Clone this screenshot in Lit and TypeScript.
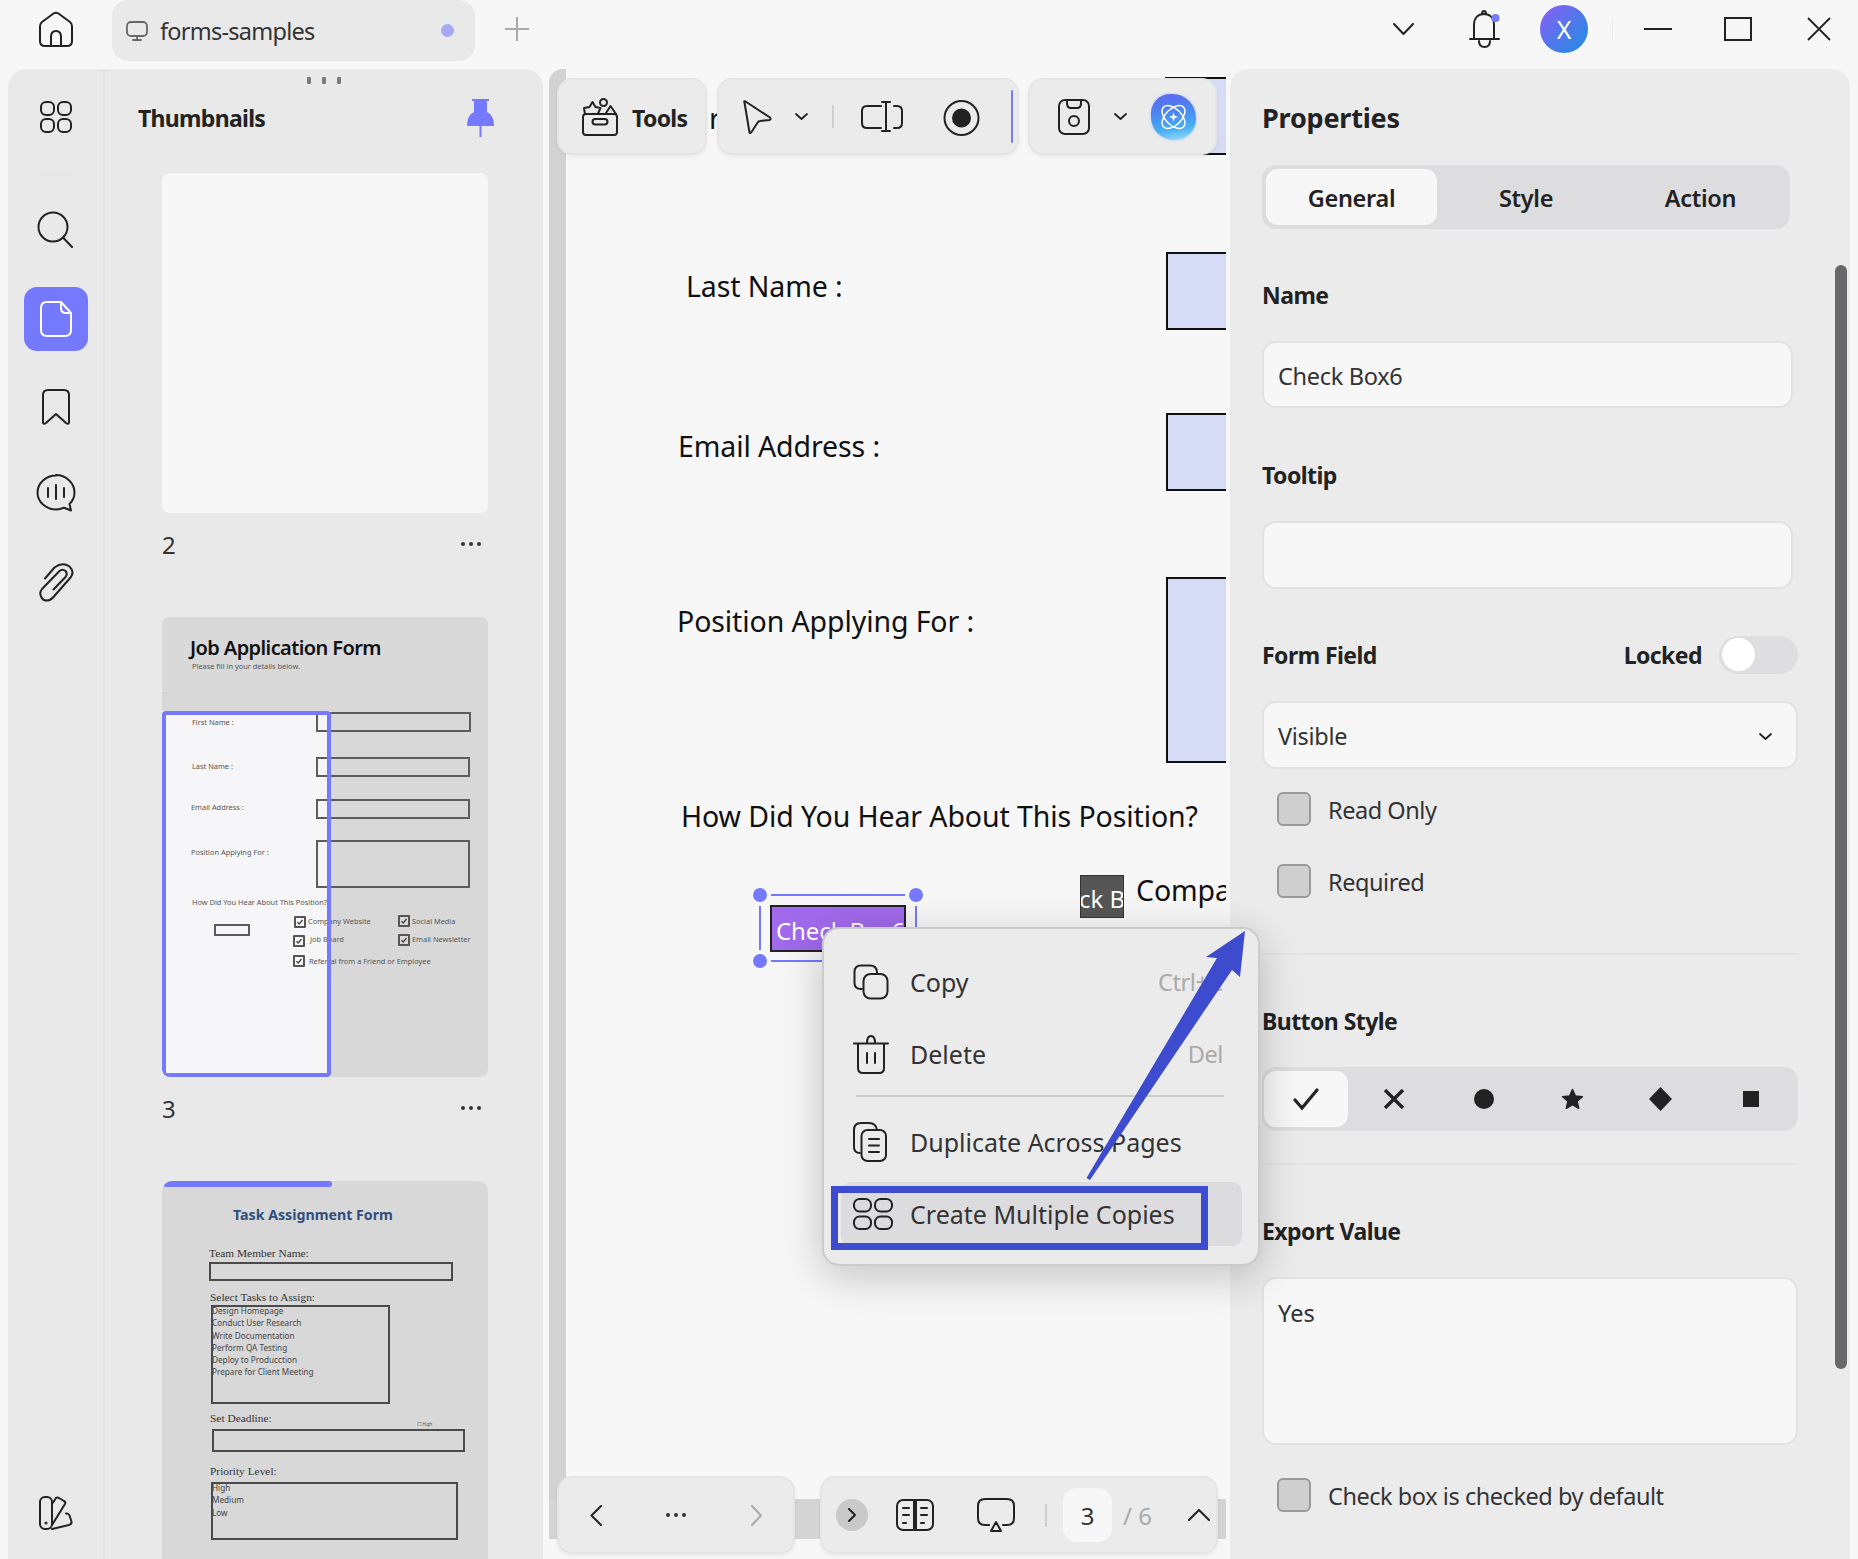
import { LitElement, html, css, svg } from "lit";
import { customElement } from "lit/decorators.js";

const ink = "#222";

const thumb2Boxes = [
  [154, 95, 155, 20],
  [154, 140, 154, 20],
  [154, 182, 154, 20],
  [154, 223, 154, 48],
  [52, 307, 36, 12],
];
const thumb2Labels: [string, number, number][] = [
  ["First Name :", 30, 105],
  ["Last Name :", 30, 149],
  ["Email Address :", 29, 190],
  ["Position Applying For :", 29, 235],
  ["How Did You Hear About This Position?", 30, 285],
  ["Company Website", 146, 304],
  ["Social Media", 250, 304],
  ["Job Board", 148, 322],
  ["Email Newsletter", 250, 322],
  ["Referral from a Friend or Employee", 147, 344],
];
const thumb2Checks = [
  [132, 299],
  [236, 298],
  [131, 318],
  [236, 317],
  [131, 338],
];
const thumb3Boxes = [
  [47, 81, 244, 19],
  [49, 124, 179, 99],
  [50, 248, 253, 23],
  [49, 301, 247, 58],
];
const thumb3Heads: [string, number, number][] = [
  ["Team Member Name:", 47, 72],
  ["Select Tasks to Assign:", 48, 116],
  ["Set Deadline:", 48, 237],
  ["Priority Level:", 48, 290],
];
const thumb3Lines: [string, number, number][] = [
  ["Design Homepage", 50, 129],
  ["Conduct User Research", 50, 141],
  ["Write Documentation", 50, 154],
  ["Perform QA Testing", 50, 166],
  ["Deploy to Producction", 50, 178],
  ["Prepare for Client Meeting", 50, 190],
  ["High", 50, 306],
  ["Medium", 50, 318],
  ["Low", 50, 331],
];

const pageLabels: [string, number, number][] = [
  ["Last Name :", 120, 217],
  ["Email Address :", 112, 377],
  ["Position Applying For :", 111, 552],
  ["How Did You Hear About This Position?", 115, 747],
];
const pageFields = [
  [599, 8, 200, 78],
  [600, 183, 200, 78],
  [600, 344, 200, 78],
  [600, 508, 200, 186],
];

const icon = (w: number, h: number, body: unknown, cls = "") =>
  html`<svg class="ic ${cls}" width=${w} height=${h} viewBox="0 0 ${w} ${h}" fill="none" stroke=${ink} stroke-width="2" stroke-linecap="round" stroke-linejoin="round">${body}</svg>`;

const chevronDown = (w = 13, h = 7) =>
  html`<svg class="ic" width=${w} height=${h} viewBox="0 0 13 7" fill="none" stroke=${ink} stroke-width="1.8" stroke-linecap="round" stroke-linejoin="round"><path d="M1 1l5.5 5L12 1" /></svg>`;

@customElement("app-root")
export class AppRoot extends LitElement {
  static styles = css`
    :host {
      display: block;
      width: 1858px;
      height: 1559px;
      overflow: hidden;
      background: #f7f7f8;
      color: #222;
      font-family: "Noto Sans", "Liberation Sans", sans-serif;
      font-size: 24px;
    }
    * {
      box-sizing: border-box;
    }
    .ic {
      display: block;
      flex: none;
    }

    /* title bar */
    .topbar {
      height: 69px;
      display: flex;
      align-items: center;
      padding: 0 27px 11px 38px;
    }
    .tab {
      align-self: flex-start;
      width: 363px;
      height: 61px;
      margin-left: 38px;
      padding: 0 21px 0 14px;
      display: flex;
      align-items: center;
      background: #e9e9ea;
      border-radius: 16px;
    }
    .tab-name {
      margin-left: 12px;
      flex: 1;
      font-size: 23.5px;
      letter-spacing: -0.75px;
      color: #333;
    }
    .tab-dot {
      width: 13px;
      height: 13px;
      border-radius: 50%;
      background: #a5a9f6;
    }
    .plus {
      margin-left: 30px;
    }
    .t-chev {
      margin-left: auto;
    }
    .bell {
      margin-left: 55px;
    }
    .avatar {
      margin-left: 40px;
      width: 48px;
      height: 48px;
      border-radius: 50%;
      display: flex;
      align-items: center;
      justify-content: center;
      color: #fff;
      font-size: 25px;
      background: linear-gradient(135deg, #8b5ef6, #1b8fe0);
    }
    .t-sep {
      margin-left: 24px;
      width: 1px;
      height: 20px;
      background: #ececed;
    }
    .t-min {
      margin-left: 31px;
    }
    .t-max {
      margin-left: 52px;
    }
    .t-close {
      margin-left: 55px;
    }

    .body {
      height: 1490px;
      display: flex;
      align-items: flex-start;
    }

    /* left panel */
    .left {
      width: 535px;
      height: 1490px;
      margin-left: 8px;
      display: flex;
      background: #e9e9ea;
      border-radius: 18px 18px 0 0;
      overflow: hidden;
    }
    .rail {
      width: 97px;
      height: 100%;
      flex: none;
      display: flex;
      flex-direction: column;
      align-items: center;
      padding-top: 32px;
      border-right: 2px solid #e4e4e5;
    }
    .rail-sep {
      width: 34px;
      height: 1px;
      margin: 41px 0 12px;
      background: #e2e2e3;
    }
    .rail-item {
      width: 64px;
      height: 88px;
      display: flex;
      align-items: center;
      justify-content: center;
    }
    .rail-item.up {
      padding-bottom: 4px;
    }
    .rail-item.on .pill {
      width: 64px;
      height: 64px;
      display: flex;
      align-items: center;
      justify-content: center;
      border-radius: 13px;
      background: #7579ff;
    }
    .rail-foot {
      margin-top: auto;
      margin-bottom: 29px;
    }
    .thumbs {
      flex: 1;
      min-width: 0;
    }
    .drag {
      display: flex;
      justify-content: center;
      gap: 11px;
      padding-top: 8px;
    }
    .drag i {
      width: 4px;
      height: 7px;
      border-radius: 1px;
      background: #7d7d7e;
    }
    .thumb-head {
      height: 68px;
      padding: 0 49px 0 33px;
      margin-bottom: 21px;
      display: flex;
      align-items: center;
      justify-content: space-between;
      font-weight: 700;
      font-size: 23px;
      letter-spacing: -0.7px;
    }
    .thumb-list {
      padding-left: 57px;
      width: 383px;
    }
    .thumb {
      position: relative;
      overflow: hidden;
      background: #d8d8d9;
      border-radius: 8px;
    }
    .thumb.blank {
      height: 340px;
      background: #f7f7f8;
    }
    .thumb.job {
      height: 460px;
    }
    .thumb.task {
      height: 400px;
      border-radius: 10px 10px 0 0;
    }
    .thumb-band {
      position: absolute;
      left: 0;
      top: 0;
      width: 100%;
      height: 76px;
      background: #d9d9da;
      border-bottom: 1px solid #d3d3d4;
    }
    .thumb-light {
      position: absolute;
      left: 0;
      top: 94px;
      width: 169px;
      height: 366px;
      background: #f6f6f8;
    }
    .thumb-sel {
      position: absolute;
      left: 0;
      top: 94px;
      width: 169px;
      height: 366px;
      border: 4px solid #7579ff;
      border-radius: 4px;
    }
    .thumb-bar {
      position: absolute;
      left: 1px;
      top: 0;
      width: 169px;
      height: 6px;
      border-radius: 3px;
      background: #7579ff;
    }
    .tb {
      position: absolute;
      border: 2px solid #5c5c5c;
    }
    .tb.dark {
      border-color: #4a4a4a;
    }
    .tc {
      position: absolute;
      width: 12px;
      height: 12px;
      border: 2px solid #555;
      border-radius: 1px;
    }
    .tt {
      position: absolute;
      white-space: nowrap;
      transform: translateY(-50%);
      font-size: 7.4px;
      color: #555;
    }
    .tt.job-title {
      font-size: 20px;
      font-weight: 600;
      letter-spacing: -0.6px;
      color: #111;
    }
    .tt.task-title {
      font-size: 14.2px;
      font-weight: 700;
      color: #2f4f7f;
    }
    .tt.serif {
      font-family: "Liberation Serif", serif;
      font-size: 11.4px;
      color: #333;
    }
    .tt.list {
      font-size: 8.2px;
      color: #444;
    }
    .tt.tiny {
      font-size: 4.6px;
    }
    .thumb-row {
      height: 40px;
      margin: 11px 0 53px;
      padding-right: 7px;
      display: flex;
      align-items: center;
      justify-content: space-between;
      color: #333;
    }
    .more {
      display: flex;
      gap: 4px;
    }
    .more i {
      width: 4px;
      height: 4px;
      border-radius: 50%;
      background: #333;
    }

    /* document area */
    .main {
      position: relative;
      width: 677px;
      height: 1470px;
      margin-left: 6px;
      display: flex;
      flex-direction: column;
    }
    .page-row {
      flex: 1;
      min-height: 0;
      display: flex;
    }
    .gutter {
      width: 17px;
      background: #d2d2d3;
      border-radius: 14px 0 0 0;
    }
    .page {
      position: relative;
      flex: 1;
      overflow: hidden;
      background: #f7f7f8;
      font-size: 28.5px;
      letter-spacing: -0.1px;
      color: #111;
    }
    .hscroll {
      height: 40px;
      background: #d4d4d5;
    }
    .pl {
      position: absolute;
      white-space: nowrap;
      transform: translateY(-50%);
    }
    .pf {
      position: absolute;
      background: #d6dbf6;
      border: 2px solid #111;
    }
    .sel-box {
      position: absolute;
      left: 193px;
      top: 825px;
      width: 158px;
      height: 68px;
      border: 2px solid #7579ff;
    }
    .handle {
      position: absolute;
      width: 14px;
      height: 14px;
      border-radius: 50%;
      background: #7579ff;
      box-shadow: 0 0 0 4px #f7f7f8;
    }
    .h-tl {
      left: -8px;
      top: -8px;
    }
    .h-tr {
      right: -8px;
      top: -8px;
    }
    .h-bl {
      left: -8px;
      bottom: -8px;
    }
    .cb-purple {
      position: absolute;
      left: 204px;
      top: 836px;
      width: 136px;
      height: 47px;
      padding: 4px 0 0 4px;
      display: flex;
      align-items: center;
      white-space: nowrap;
      overflow: hidden;
      background: #a169ec;
      border: 2px solid #222;
      color: #fff;
      font-size: 24px;
    }
    .cb-dark {
      position: absolute;
      left: 514px;
      top: 806px;
      width: 44px;
      height: 43px;
      padding-top: 4px;
      display: flex;
      align-items: center;
      justify-content: center;
      overflow: hidden;
      white-space: nowrap;
      background: #555;
      border: 1px solid #333;
      color: #fff;
      font-size: 24px;
    }

    /* floating toolbars */
    .bar {
      position: absolute;
      display: flex;
      align-items: center;
      height: 77px;
      background: #ebebec;
      border: 2px solid #e5e5e6;
      border-radius: 15px;
      box-shadow: 0 2px 4px rgba(0, 0, 0, 0.06);
    }
    .bar.tools {
      left: 8px;
      top: 9px;
      width: 150px;
      padding-left: 23px;
    }
    .bar.select {
      left: 168px;
      top: 9px;
      width: 302px;
      padding-left: 23px;
    }
    .bar.save {
      left: 479px;
      top: 9px;
      width: 189px;
      padding-left: 28px;
    }
    .bar.pager {
      left: 8px;
      top: 1407px;
      width: 238px;
      height: 78px;
      padding-left: 31px;
    }
    .bar.view {
      left: 271px;
      top: 1407px;
      width: 398px;
      height: 78px;
      padding-left: 14px;
    }
    .tools-label {
      margin-left: 14px;
      padding-top: 2px;
      font-weight: 700;
      font-size: 23px;
      letter-spacing: -0.7px;
    }
    .m23 {
      margin-left: 23px;
    }
    .m24 {
      margin-left: 24px;
    }
    .m27 {
      margin-left: 27px;
    }
    .m28 {
      margin-left: 28px;
    }
    .m30 {
      margin-left: 30px;
    }
    .m31 {
      margin-left: 31px;
    }
    .m36 {
      margin-left: 36px;
    }
    .m40 {
      margin-left: 40px;
    }
    .m43 {
      margin-left: 43px;
    }
    .m64 {
      margin-left: 64px;
    }
    .m65 {
      margin-left: 65px;
    }
    .vsep {
      width: 2px;
      height: 23px;
      background: #cfcfd0;
    }
    .blue-line {
      width: 2px;
      height: 53px;
      background: #7579ff;
      border-radius: 1px;
    }
    .ai {
      position: relative;
      width: 45px;
      height: 46px;
      border-radius: 42% 52% 46% 50%;
      background: linear-gradient(170deg, #5e65ee 0%, #4c86f2 40%, #45aef4 72%, #a8e2f8 100%);
      box-shadow: 0 0 3px rgba(90, 150, 240, 0.45);
    }
    .ai svg {
      position: absolute;
      left: 4px;
      top: 4px;
    }
    .round-btn {
      width: 32px;
      height: 32px;
      margin-left: 0;
      display: flex;
      align-items: center;
      justify-content: center;
      border-radius: 50%;
      background: #c9c9ca;
    }
    .pg-input {
      width: 49px;
      height: 54px;
      margin-left: 16px;
      display: flex;
      align-items: center;
      justify-content: center;
      background: #f7f7f8;
      border-radius: 14px;
      color: #333;
    }
    .pg-total {
      margin-left: 11px;
      color: #aaa;
    }

    /* context menu */
    .menu {
      position: absolute;
      z-index: 5;
      left: 273px;
      top: 858px;
      width: 438px;
      height: 339px;
      padding: 17px 16px 0 17px;
      background: #ebebec;
      border: 2px solid #cbcbcc;
      border-radius: 17px;
      box-shadow: 0 10px 44px rgba(0, 0, 0, 0.22);
      font-size: 25px;
      color: #333;
    }
    .mi {
      height: 72px;
      padding: 0 19px 0 12px;
      display: flex;
      align-items: center;
    }
    .mi .ic {
      margin-right: 20px;
    }
    .mi span {
      white-space: nowrap;
    }
    .mi-cell {
      width: 57px;
      flex: none;
    }
    .mi kbd {
      margin-left: auto;
      font: inherit;
      font-size: 23.5px;
      letter-spacing: -0.4px;
      color: #aaa;
    }
    .mi-sep {
      height: 2px;
      margin: 5px 18px 9px 15px;
      background: #cdcdce;
    }
    .mi.hover {
      height: 64px;
      margin-top: 4px;
      background: #dcdcde;
      border-radius: 10px;
    }
    .mark {
      position: absolute;
      left: 7px;
      top: 257px;
      width: 377px;
      height: 64px;
      border: 7px solid #3d4bcf;
    }
    .arrow {
      position: absolute;
      z-index: 6;
      left: 531px;
      top: 856px;
    }

    /* properties */
    .right {
      position: relative;
      width: 620px;
      height: 1490px;
      margin-left: 4px;
      padding: 29px 52px 0 32px;
      background: #ebebec;
      border-radius: 18px 18px 0 0;
      overflow: hidden;
    }
    .title {
      height: 40px;
      line-height: 40px;
      font-size: 27px;
      font-weight: 700;
      letter-spacing: -0.2px;
    }
    .seg {
      display: grid;
      background: #dddddf;
      border-radius: 14px;
    }
    .tabs {
      width: 528px;
      height: 64px;
      margin-top: 27px;
      padding: 4px;
      grid-template-columns: 171px 178px 1fr;
      font-size: 23.5px;
      font-weight: 600;
      letter-spacing: -0.3px;
    }
    .tabs > div {
      padding-top: 2px;
    }
    .seg > div {
      display: flex;
      align-items: center;
      justify-content: center;
    }
    .seg .on {
      background: #f7f7f8;
      border-radius: 12px;
    }
    .label {
      height: 32px;
      line-height: 32px;
      font-size: 23px;
      font-weight: 700;
      letter-spacing: -0.55px;
    }
    .field {
      display: flex;
      align-items: center;
      justify-content: space-between;
      padding: 2px 24px 0 14px;
      background: #f7f7f8;
      border: 2px solid #e2e2e3;
      border-radius: 14px;
      font-size: 23.5px;
      letter-spacing: -0.3px;
      color: #333;
    }
    .short {
      width: 531px;
    }
    .row {
      height: 38px;
      display: flex;
      align-items: center;
    }
    .toggle {
      position: relative;
      width: 79px;
      height: 38px;
      margin-left: 17px;
      background: #dedee0;
      border-radius: 19px;
    }
    .toggle i {
      position: absolute;
      left: 3px;
      top: 2px;
      width: 33px;
      height: 33px;
      border-radius: 50%;
      background: #fff;
    }
    .check {
      height: 34px;
      padding-left: 15px;
      display: flex;
      align-items: center;
      gap: 17px;
      font-size: 23.5px;
      letter-spacing: -0.45px;
      color: #333;
    }
    .check span {
      padding-top: 2px;
    }
    .check i {
      width: 34px;
      height: 34px;
      background: #cfcfd0;
      border: 2px solid #9a9a9b;
      border-radius: 6px;
    }
    .div {
      height: 2px;
      background: #e4e4e6;
    }
    .styles {
      height: 64px;
      margin-top: 30px;
      padding: 4px 0 4px 2px;
      grid-template-columns: 84px 92px 88px 88px 88px 1fr;
    }
    .area {
      height: 168px;
      margin-top: 30px;
      padding: 18px 14px;
      background: #f7f7f8;
      border: 2px solid #e2e2e3;
      border-radius: 14px;
      font-size: 23.5px;
      color: #333;
    }
    .scroll {
      position: absolute;
      right: 3px;
      top: 196px;
      width: 12px;
      height: 1104px;
      border-radius: 6px;
      background: #68686a;
    }
  `;

  private _thumbs() {
    return html`
      <div class="thumb blank"></div>
      <div class="thumb-row"><span>2</span><span class="more"><i></i><i></i><i></i></span></div>
      <div class="thumb job">
        <div class="thumb-band"></div>
        <div class="thumb-light"></div>
        <div class="tt job-title" style="left:28px;top:30px">Job Application Form</div>
        <div class="tt" style="left:30px;top:49px">Please fill in your details below.</div>
        ${thumb2Labels.map(([t, x, y]) => html`<div class="tt" style="left:${x}px;top:${y}px">${t}</div>`)}
        ${thumb2Boxes.map(([x, y, w, h]) => html`<div class="tb" style="left:${x}px;top:${y}px;width:${w}px;height:${h}px"></div>`)}
        ${thumb2Checks.map(
          ([x, y]) => html`<div class="tc" style="left:${x}px;top:${y}px">
            <svg width="8" height="8" viewBox="0 0 8 8" fill="none" stroke="#444" stroke-width="1.3" style="display:block"><path d="M1.5 4.2l1.7 1.8L6.5 2" /></svg>
          </div>`
        )}
        <div class="thumb-sel"></div>
      </div>
      <div class="thumb-row"><span>3</span><span class="more"><i></i><i></i><i></i></span></div>
      <div class="thumb task">
        <div class="thumb-bar"></div>
        <div class="tt task-title" style="left:71px;top:33px">Task Assignment Form</div>
        ${thumb3Heads.map(([t, x, y]) => html`<div class="tt serif" style="left:${x}px;top:${y}px">${t}</div>`)}
        ${thumb3Lines.map(([t, x, y]) => html`<div class="tt list" style="left:${x}px;top:${y}px">${t}</div>`)}
        <div class="tt tiny" style="left:255px;top:243px">☐ High</div>
        ${thumb3Boxes.map(([x, y, w, h]) => html`<div class="tb dark" style="left:${x}px;top:${y}px;width:${w}px;height:${h}px"></div>`)}
      </div>
    `;
  }

  private _rail() {
    return html`
      <div class="rail">
        ${icon(32, 32, svg`<rect x="1" y="1" width="13" height="13" rx="5"/><rect x="18" y="1" width="13" height="13" rx="5"/><rect x="1" y="18" width="13" height="13" rx="5"/><rect x="18" y="18" width="13" height="13" rx="5"/>`)}
        <div class="rail-sep"></div>
        <div class="rail-item up">
          ${icon(37, 37, svg`<circle cx="16" cy="16" r="14.5"/><path d="M26.5 27l8.5 9"/>`)}
        </div>
        <div class="rail-item on">
          <div class="pill">
            <svg class="ic" width="32" height="36" viewBox="0 0 32 36" fill="none" stroke="#fff" stroke-width="2" stroke-linejoin="round">
              <path d="M7 1h14l10 11v17q0 6-6 6H7q-6 0-6-6V7q0-6 6-6z" />
              <path d="M21 1v6q0 5 5 5h5" />
            </svg>
          </div>
        </div>
        <div class="rail-item">
          ${icon(28, 36, svg`<path d="M6 1h16q5 0 5 5v27q0 3-3 1l-10-9-10 9q-3 2-3-1V6q0-5 5-5z"/>`)}
        </div>
        <div class="rail-item up">
          ${icon(40, 38, svg`<path d="M20 1.500c-10 0-18.500 7.500-18.500 17s8.500 17 18.500 17c3 0 5.500-.6 8-1.800l7 2.800-1.500-6.500c3.200-3 5-7 5-11.500 0-9.500-8.500-17.500-18.500-17.500z"/><path d="M12 14v9M20 11v14M28 14v9"/>`)}
        </div>
        <div class="rail-item">
          ${icon(36, 42, svg`<path d="M7 16.500L16.500 5.500Q24.500 -.5 31.500 4.500 37 10 32.500 15.500L15.500 35Q10.500 40.500 5 37.500 0 32 4 27L21.500 9Q24.500 6.500 27.500 9 30 12 27.500 15L15.500 27.500"/>`)}
        </div>
        <div class="rail-foot">
          ${icon(34, 34, svg`<rect x="1" y="1" width="12" height="32" rx="5"/><path d="M13 8l4-6q1-1 3 0l5 3q2 1 1 3l-13 21"/><path d="M13 33l17-4q3-1 2.500-3.500l-2-6q-1-2.500-3.500-2"/><circle cx="7" cy="27" r=".6"/>`)}
        </div>
      </div>
    `;
  }

  private _menu() {
    return html`
      <div class="menu">
        <div class="mi">
          <div class="mi-cell">${icon(36, 36, svg`<path d="M9 25h-1q-6.500 0-6.500-6V8q0-6.500 6.500-6.500h9q6.500 0 7 6.500v1"/><rect x="10.500" y="10" width="24" height="24.500" rx="7"/>`)}</div>
          <span>Copy</span><kbd>Ctrl+C</kbd>
        </div>
        <div class="mi">
          <div class="mi-cell">${icon(36, 40, svg`<path d="M1 9.500h34M14 9q0-7 4-7t4 7M5 10v24q0 5 5 5h16q5 0 5-5V10M14 19v10M22 19v10"/>`)}</div>
          <span>Delete</span><kbd>Del</kbd>
        </div>
        <div class="mi-sep"></div>
        <div class="mi">
          <div class="mi-cell">${icon(34, 40, svg`<path d="M7 31q-6 0-6-6V8q0-7 7-7h8q7 0 8 7"/><rect x="8.500" y="8" width="24.500" height="31" rx="6"/><path d="M16 17h10M16 23.500h10M16 30h10"/>`)}</div>
          <span>Duplicate Across Pages</span>
        </div>
        <div class="mi hover">
          <div class="mi-cell">${icon(40, 32, svg`<rect x="1" y="1" width="17" height="12.500" rx="5.500"/><rect x="22" y="1" width="17" height="12.500" rx="5.500"/><rect x="1" y="18.500" width="17" height="12.500" rx="5.500"/><rect x="22" y="18.500" width="17" height="12.500" rx="5.500"/>`)}</div>
          <span>Create Multiple Copies</span>
        </div>
        <div class="mark"></div>
      </div>
      <svg class="arrow" width="175" height="260" viewBox="0 0 175 260">
        <polygon fill="#3d4bcf" points="6.500,253 137,33 126,32 165,6 160,52 152,45 10,255" />
      </svg>
    `;
  }

  private _toolbars() {
    return html`
      <div class="bar tools">
        ${icon(36, 38, svg`<path d="M4 16h28q3 0 3 3v15q0 3-3 3H4q-3 0-3-3V19q0-3 3-3z"/><rect x="10.500" y="21" width="15" height="5.500" rx="2.700"/><path d="M3 16l-1-6 5.500-1 3-5 3 5 5 1-2.500 5.500"/><circle cx="21.500" cy="4.500" r="3.500"/><path d="M24 15l4.500-7 5.500 8"/>`)}
        <span class="tools-label">Tools</span>
      </div>
      <div class="bar select">
        ${icon(30, 34, svg`<path d="M2.500 2.500q-1-2 1-1L28 17.500q1.500 1.500-.5 2.500l-9.500 1q-1.500 0-2 1l-6.500 10q-1.500 2-2 .5z"/>`)}
        <div class="m23">${chevronDown()}</div>
        <div class="vsep m24"></div>
        <div class="m27">
          ${icon(42, 31, svg`<path d="M20 5H6q-5 0-5 5v12q0 5 5 5h14M33 5h3q5 0 5 5v12q0 5-5 5h-3M25 1v29M21 1h8M21 30h8"/>`)}
        </div>
        <div class="m40">
          <svg class="ic" width="37" height="38" viewBox="0 0 37 38" fill="none" stroke=${ink} stroke-width="2">
            <circle cx="18.500" cy="20" r="17" /><circle cx="18.500" cy="20" r="8.500" fill=${ink} />
          </svg>
        </div>
        <div class="blue-line m31"></div>
      </div>
      <div class="bar save">
        ${icon(32, 36, svg`<rect x="1" y="1" width="30" height="34" rx="6"/><path d="M9 1v3q0 5 4 5h6q4 0 4-5V1"/><circle cx="16" cy="22" r="5"/>`)}
        <div class="m24">${chevronDown()}</div>
        <div class="ai m24">
          <svg width="37" height="38" viewBox="0 0 37 38" fill="none" stroke="#fff" stroke-width="1.500">
            <ellipse cx="18.500" cy="19" rx="14" ry="8" transform="rotate(45 18.500 19)" />
            <ellipse cx="18.500" cy="19" rx="14" ry="8" transform="rotate(-45 18.500 19)" />
            <path fill="#fff" stroke="none" d="M18.500 14.500l1.200 3.300 3.300 1.200-3.300 1.200-1.200 3.300-1.200-3.300-3.300-1.200 3.300-1.200z" />
          </svg>
        </div>
      </div>
      <div class="bar pager">
        ${icon(12, 21, svg`<path d="M11 1L1.500 10.500 11 20"/>`)}
        <div class="m64">
          <span class="more"><i></i><i></i><i></i></span>
        </div>
        <div class="m65">
          <svg class="ic" width="11" height="21" viewBox="0 0 11 21" fill="none" stroke="#aaa" stroke-width="2" stroke-linecap="round" stroke-linejoin="round"><path d="M1 1l9 9.500L1 20" /></svg>
        </div>
      </div>
      <div class="bar view">
        <div class="round-btn">${icon(8, 14, svg`<path d="M1 1l6 6-6 6"/>`)}</div>
        <div class="m28">
          ${icon(38, 32, svg`<rect x="1" y="1" width="36" height="30" rx="6"/><path d="M18 1v30M20 1v30M7 9h6M7 16h6M7 24h3M25 9h6M25 16h6M25 24h3"/>`)}
        </div>
        <div class="m43">
          ${icon(38, 34, svg`<path d="M12 27H8q-7 0-7-7V8q0-7 7-7h22q7 0 7 7v12q0 7-7 7h-4"/><path d="M19 24l-5 9h10z"/>`)}
        </div>
        <div class="vsep m30"></div>
        <div class="pg-input">3</div>
        <div class="pg-total">/ 6</div>
        <div class="m36">
          ${icon(22, 12, svg`<path d="M1 11L11 1l10 10"/>`)}
        </div>
      </div>
    `;
  }

  private _props() {
    return html`
      <div class="right">
        <div class="title">Properties</div>
        <div class="seg tabs">
          <div class="on">General</div>
          <div>Style</div>
          <div>Action</div>
        </div>
        <div class="label" style="margin-top:50px">Name</div>
        <div class="field short" style="margin-top:30px;height:67px">Check Box6</div>
        <div class="label" style="margin-top:51px">Tooltip</div>
        <div class="field short" style="margin-top:30px;height:68px"></div>
        <div class="row" style="margin-top:47px">
          <div class="label">Form Field</div>
          <div class="label" style="margin-left:auto">Locked</div>
          <div class="toggle"><i></i></div>
        </div>
        <div class="field" style="margin-top:27px;height:68px">Visible ${chevronDown()}</div>
        <div class="check" style="margin-top:23px"><i></i><span>Read Only</span></div>
        <div class="check" style="margin-top:38px"><i></i><span>Required</span></div>
        <div class="div" style="margin-top:55px"></div>
        <div class="label" style="margin-top:50px">Button Style</div>
        <div class="seg styles">
          <div class="on">
            <svg class="ic" width="26" height="22" viewBox="0 0 26 22" fill="none" stroke=${ink} stroke-width="3.200" stroke-linecap="round"><path d="M2 12l7 8L24 2" /></svg>
          </div>
          <div>
            <svg class="ic" width="22" height="20" viewBox="0 0 22 20" fill="none" stroke=${ink} stroke-width="3.400"><path d="M2 1l18 18M20 1L2 19" /></svg>
          </div>
          <div><svg class="ic" width="20" height="20" viewBox="0 0 20 20"><circle cx="10" cy="10" r="10" fill=${ink} /></svg></div>
          <div>
            <svg class="ic" width="23" height="22" viewBox="0 0 23 22"><path fill=${ink} stroke=${ink} stroke-width="1.500" stroke-linejoin="round" d="M11.500 1.500l2.900 6.500 7 .7-5.300 4.600 1.600 7-6.200-3.700-6.200 3.700 1.600-7L1.600 8.700l7-.7z" /></svg>
          </div>
          <div><svg class="ic" width="23" height="24" viewBox="0 0 23 24"><path fill=${ink} d="M11.500 0L23 12 11.500 24 0 12z" /></svg></div>
          <div><svg class="ic" width="16" height="16" viewBox="0 0 16 16"><rect width="16" height="16" fill=${ink} /></svg></div>
        </div>
        <div class="div" style="margin-top:32px"></div>
        <div class="label" style="margin-top:50px">Export Value</div>
        <div class="area">Yes</div>
        <div class="check" style="margin-top:33px"><i></i><span>Check box is checked by default</span></div>
        <div class="scroll"></div>
      </div>
    `;
  }

  render() {
    return html`
      <div class="topbar">
        ${icon(36, 36, svg`<path d="M2 15q0-2.500 2-4L15.500 2.500Q18 .8 20.500 2.500L32 11q2 1.500 2 4v15q0 5-5 5H7q-5 0-5-5z"/><path d="M13 35v-9q0-6 5-6t5 6v9"/>`)}
        <div class="tab">
          <svg class="ic" width="22" height="20" viewBox="0 0 22 20" fill="none" stroke="#666" stroke-width="1.800" stroke-linecap="round">
            <rect x="1" y="1" width="20" height="14" rx="4" /><path d="M11 15v4M7 19h8" />
          </svg>
          <div class="tab-name">forms-samples</div>
          <div class="tab-dot"></div>
        </div>
        <svg class="ic plus" width="24" height="24" viewBox="0 0 24 24" stroke="#aaa" stroke-width="2"><path d="M12 0v24M0 12h24" /></svg>
        <div class="t-chev">${icon(21, 12, svg`<path d="M1 1l9.500 10L20 1"/>`)}</div>
        <div class="bell">
          <svg class="ic" width="31" height="38" viewBox="0 0 31 38" fill="none" stroke=${ink} stroke-width="2" stroke-linecap="round" stroke-linejoin="round">
            <path d="M1 29h29M5 28V15C5 8 9 4 15 4s10 4 10 11v13M13 4q0-3 2-3t2 3M10 31q0 6 5.500 6t5.500-6" />
            <circle cx="26.500" cy="8" r="4" fill="#7579ff" stroke="none" />
          </svg>
        </div>
        <div class="avatar">X</div>
        <div class="t-sep"></div>
        <svg class="ic t-min" width="28" height="2" viewBox="0 0 28 2"><rect width="28" height="2" fill=${ink} /></svg>
        <svg class="ic t-max" width="28" height="24" viewBox="0 0 28 24" fill="none" stroke=${ink} stroke-width="2"><rect x="1" y="1" width="26" height="22" /></svg>
        <svg class="ic t-close" width="24" height="24" viewBox="0 0 24 24" stroke=${ink} stroke-width="1.800"><path d="M1 1l22 22M23 1L1 23" /></svg>
      </div>
      <div class="body">
        <div class="left">
          ${this._rail()}
          <div class="thumbs">
            <div class="drag"><i></i><i></i><i></i></div>
            <div class="thumb-head">
              <span>Thumbnails</span>
              <svg class="ic" width="27" height="38" viewBox="0 0 27 38" fill="#7579ff">
                <path d="M5 0h17v2h-2v11q7 3 7 14H14.500v11h-2V27H0q0-11 7-14V2H5z" />
              </svg>
            </div>
            <div class="thumb-list">${this._thumbs()}</div>
          </div>
        </div>
        <div class="main">
          <div class="page-row">
            <div class="gutter"></div>
            <div class="page">
              ${pageFields.map(([x, y, w, h]) => html`<div class="pf" style="left:${x}px;top:${y}px;width:${w}px;height:${h}px"></div>`)}
              ${pageLabels.map(([t, x, y]) => html`<div class="pl" style="left:${x}px;top:${y}px">${t}</div>`)}
              <div class="pl" style="left:143px;top:49px">r</div>
              <div class="sel-box">
                <div class="handle h-tl"></div>
                <div class="handle h-tr"></div>
                <div class="handle h-bl"></div>
              </div>
              <div class="cb-purple">Check Box6</div>
              <div class="cb-dark">ck B</div>
              <div class="pl" style="left:570px;top:821px">Compa</div>
            </div>
          </div>
          <div class="hscroll"></div>
          ${this._toolbars()} ${this._menu()}
        </div>
        ${this._props()}
      </div>
    `;
  }
}

declare global {
  interface HTMLElementTagNameMap {
    "app-root": AppRoot;
  }
}
